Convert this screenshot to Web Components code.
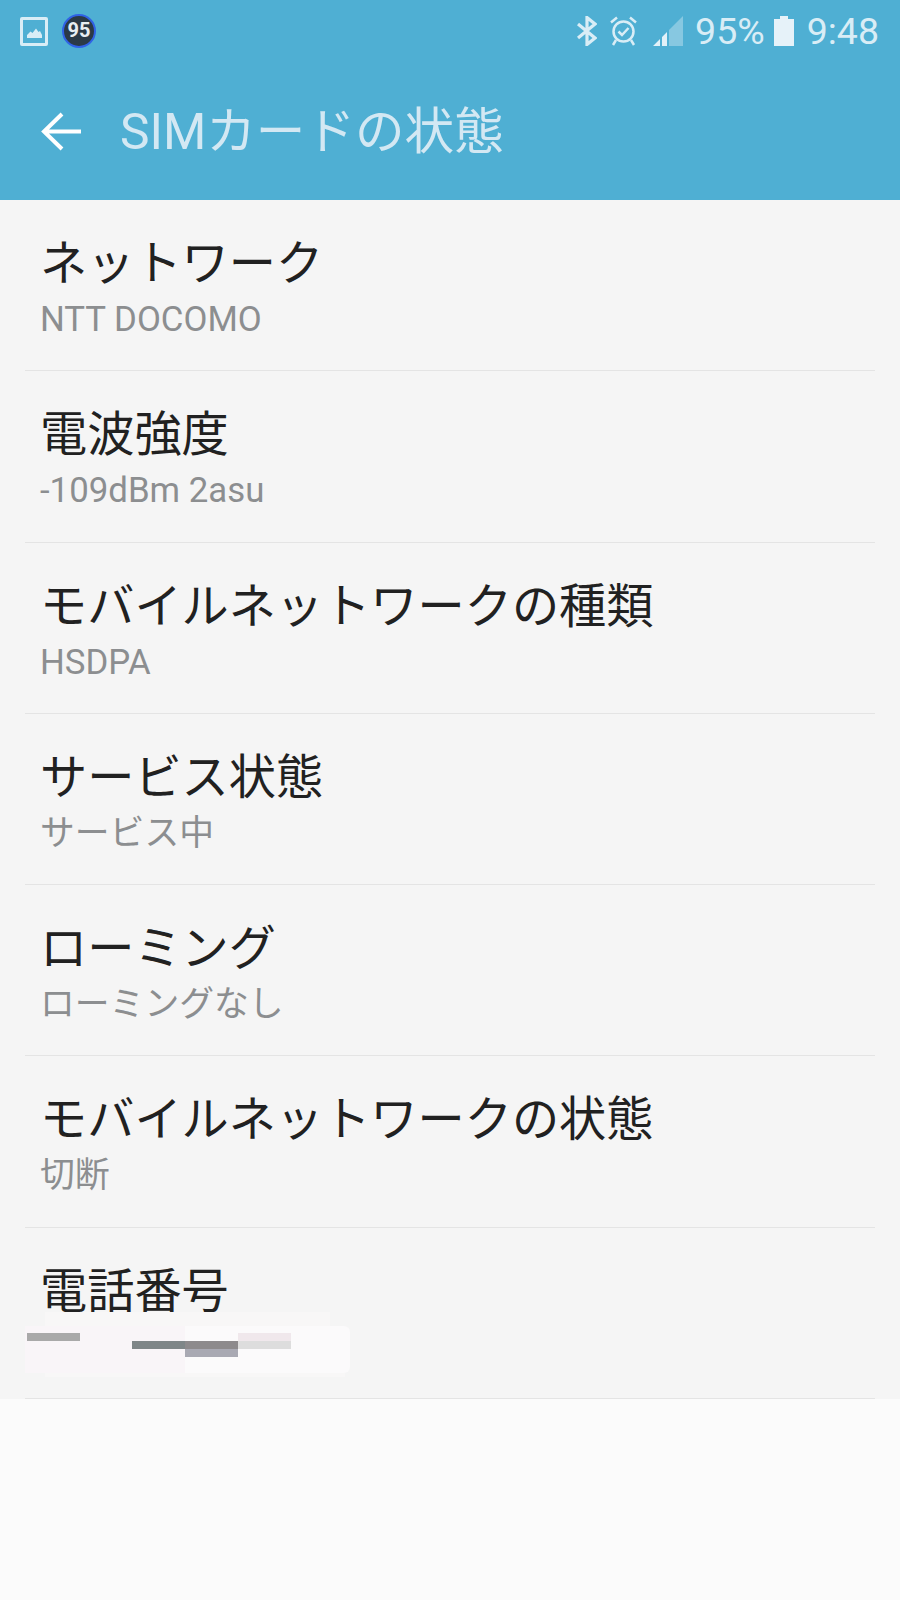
<!DOCTYPE html>
<html lang="ja">
<head>
<meta charset="utf-8">
<style>
  html, body { margin: 0; padding: 0; }
  body { width: 900px; height: 1600px; background: #fbfbfb; font-family: Roboto, "Noto Sans CJK JP", sans-serif; overflow: hidden; }
</style>
</head>
<body>
<app-header title-text="SIMカードの状態"></app-header>
<info-list>
  <info-row label="ネットワーク">NTT DOCOMO</info-row>
  <info-row label="電波強度">-109dBm 2asu</info-row>
  <info-row label="モバイルネットワークの種類">HSDPA</info-row>
  <info-row label="サービス状態">サービス中</info-row>
  <info-row label="ローミング">ローミングなし</info-row>
  <info-row label="モバイルネットワークの状態">切断</info-row>
  <info-row label="電話番号"><redacted-number></redacted-number></info-row>
</info-list>
<script>
class StatusBar extends HTMLElement {
  connectedCallback() {
    this.attachShadow({ mode: 'open' });
    this.shadowRoot.innerHTML = `
      <style>
        :host { display: flex; align-items: center; justify-content: space-between; height: 62px; padding: 0 21px 0 20px; color: #d9edf6; font-size: 37.5px; }
        .side { display: flex; align-items: center; }
        svg { display: block; }
        .badge { box-sizing: border-box; width: 34px; height: 34px; margin-left: 14px; border-radius: 50%; border: 2.5px solid #2f62e6; background: #2b3a46; color: #e8eef2; font: 700 20px/29px Roboto, sans-serif; text-align: center; }
        .pct { margin-left: 12px; }
        .time { margin-left: 13px; }
      </style>
      <div class="side">
        <svg width="28" height="29" viewBox="0 0 28 29"><path fill="#d9edf6" fill-rule="evenodd" d="M2 0h24a2 2 0 0 1 2 2v25a2 2 0 0 1-2 2H2a2 2 0 0 1-2-2V2a2 2 0 0 1 2-2zM3 3v23h22V3zM7 21v-3l3.500-3.500 2 1.500 3.500-4.500 2.500 3.500 1.500-1 2 4v3z"/></svg>
        <div class="badge">95</div>
      </div>
      <div class="side">
        <svg width="20" height="30" viewBox="0 0 20 30"><path fill="none" stroke="#d9edf6" stroke-width="3.200" d="M1 8l17 14-8 6.500V1.500L18 8 1 22"/></svg>
        <svg style="margin-left:13px" width="27" height="30" viewBox="0 0 27 30"><g fill="none" stroke="#d9edf6" stroke-width="2.500"><circle cx="13.500" cy="15.500" r="10"/><path d="M8.500 15.500l3.500 3.500 6.500-7M1 6.500l6-5M26 6.500l-6-5M6 24l-3 5M21 24l3 5"/></g></svg>
        <svg style="margin-left:16px" width="30" height="30" viewBox="0 0 30 30"><path fill="#e2f1f8" d="M0 30l7-7v7zM9 21l5-5v14H9z"/><path fill="#e2f1f8" fill-opacity=".38" d="M16 14L30 0v30H16z"/></svg>
        <span class="pct">95%</span>
        <svg style="margin-left:9px" width="20" height="30" viewBox="0 0 20 30"><path fill="#e6f2f9" d="M6 0h8v3h6v27H0V3h6z"/></svg>
        <span class="time">9:48</span>
      </div>`;
  }
}
customElements.define('status-bar', StatusBar);

class AppHeader extends HTMLElement {
  connectedCallback() {
    this.attachShadow({ mode: 'open' });
    this.shadowRoot.innerHTML = `
      <style>
        :host { display: block; height: 200px; background: #4fafd3; box-sizing: border-box; }
        .bar { display: flex; align-items: center; height: 138px; padding-left: 40px; }
        .title { margin: 4px 0 0 39px; color: #d3e8f3; font-size: 49.6px; line-height: 1; }
        svg { display: block; }
      </style>
      <status-bar></status-bar>
      <div class="bar">
        <svg width="41" height="41" viewBox="0 0 41 41"><path fill="none" stroke="#fff" stroke-width="4" d="M41 20.500H4M22 3L4 20.500 22 38"/></svg>
        <span class="title">${this.getAttribute('title-text')}</span>
      </div>`;
  }
}
customElements.define('app-header', AppHeader);

class InfoList extends HTMLElement {
  connectedCallback() {
    this.attachShadow({ mode: 'open' });
    this.shadowRoot.innerHTML = `
      <style>
        :host { display: block; background: #f5f5f5; }
      </style>
      <slot></slot>`;
  }
}
customElements.define('info-list', InfoList);

class InfoRow extends HTMLElement {
  connectedCallback() {
    this.attachShadow({ mode: 'open' });
    this.shadowRoot.innerHTML = `
      <style>
        :host { display: block; height: 171.25px; box-sizing: border-box; margin: 0 25px; padding: 35px 15px 0; border-bottom: 1.5px solid #e4e4e4; }
        .label { color: #212121; font-size: 47.2px; line-height: 58px; white-space: nowrap; }
        .value { color: #8c8e90; font-size: 34.8px; line-height: 40px; margin-top: 6px; white-space: nowrap; }
      </style>
      <div class="label">${this.getAttribute('label')}</div>
      <div class="value"><slot></slot></div>`;
  }
}
customElements.define('info-row', InfoRow);

// blurred out phone number
class RedactedNumber extends HTMLElement {
  connectedCallback() {
    this.attachShadow({ mode: 'open' });
    this.shadowRoot.innerHTML = `
      <style>
        :host { display: block; position: relative; height: 40px; margin-top: -1px; }
        div { position: absolute; }
        .top { left: 5px; top: -14px; width: 285px; height: 14px; background: #f8f7f7; }
        .bottom { left: 5px; top: 47px; width: 300px; height: 4px; background: #f8f7f7; }
        .left { left: -15px; top: 0; width: 160px; height: 47px; background: #f9f5f8; }
        .right { left: 145px; top: 0; width: 165px; height: 47px; background: #fbfafb; border-radius: 0 6px 6px 0; }
        .a { left: -13px; top: 7px; width: 53px; height: 8px; background: #a9a9a9; }
        .b { left: 92px; top: 15px; width: 53px; height: 8px; background: #7f8688; }
        .c { left: 145px; top: 15px; width: 53px; height: 8px; background: #8d8a8c; }
        .d { left: 145px; top: 23px; width: 53px; height: 8px; background: #a9a9b3; }
        .e { left: 198px; top: 7px; width: 53px; height: 8px; background: #f0e8ec; }
        .f { left: 198px; top: 15px; width: 53px; height: 8px; background: #dddddd; }
      </style>
      <div class="top"></div><div class="bottom"></div><div class="left"></div><div class="right"></div>
      <div class="a"></div><div class="b"></div><div class="c"></div><div class="d"></div><div class="e"></div><div class="f"></div>`;
  }
}
customElements.define('redacted-number', RedactedNumber);
</script>
</body>
</html>
